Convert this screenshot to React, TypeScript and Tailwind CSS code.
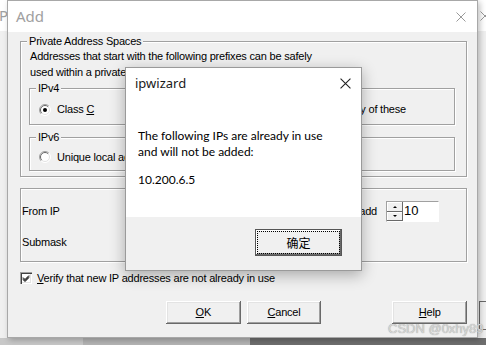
import React from 'react'

const ui = "font-['Liberation_Sans',Arial,sans-serif] text-[11px] tracking-[-0.2px] text-black"

const Radio: React.FC<{ checked?: boolean }> = ({ checked }) => (
  <svg width="12" height="12" viewBox="0 0 12 12" className="shrink-0">
    <circle cx="6" cy="6" r="5.5" fill="#fff" />
    <path d="M2.1 9.9 A5.5 5.5 0 0 1 9.9 2.1" fill="none" stroke="#a0a0a0" strokeWidth="1" />
    <path d="M2.8 9.2 A4.5 4.5 0 0 1 9.2 2.8" fill="none" stroke="#696969" strokeWidth="1" />
    <path d="M9.9 2.1 A5.5 5.5 0 0 1 2.1 9.9" fill="none" stroke="#fff" strokeWidth="1" />
    <path d="M9.2 2.8 A4.5 4.5 0 0 1 2.8 9.2" fill="none" stroke="#e3e3e3" strokeWidth="1" />
    {checked && <circle cx="6" cy="6" r="2" fill="#000" />}
  </svg>
)

const Group: React.FC<{ label?: string; className?: string; children?: React.ReactNode }> = ({ label, className, children }) => (
  <div className={`relative border border-[#a0a0a0] shadow-[inset_1px_1px_0_#fff,1px_1px_0_#fff] ${className ?? ''}`}>
    {label && (
      <span className="absolute -top-[8px] left-[6px] bg-[#f0f0f0] px-[2px] leading-[14px]">{label}</span>
    )}
    {children}
  </div>
)

const Btn: React.FC<{ children: React.ReactNode; className?: string }> = ({ children, className }) => (
  <div
    className={`flex h-[23px] w-[75px] items-center justify-center bg-[#f0f0f0] shadow-[inset_-1px_-1px_0_#696969,inset_1px_1px_0_#fff,inset_-2px_-2px_0_#a0a0a0,inset_2px_2px_0_#e3e3e3] ${className ?? ''}`}
  >
    {children}
  </div>
)

const CloseX: React.FC<{ color: string; size: number }> = ({ color, size }) => (
  <svg width={size} height={size} viewBox="0 0 10 10">
    <path d="M0.5 0.5 L9.5 9.5 M9.5 0.5 L0.5 9.5" stroke={color} strokeWidth="1" fill="none" />
  </svg>
)

export default function App() {
  return (
    <div className={`relative h-[345px] w-[486px] overflow-hidden bg-[#f0f0f0] ${ui}`}>
      {/* window behind */}
      <div className="absolute inset-0 flex flex-col">
        <div className="flex h-[31px] items-center justify-between bg-white">
          <span className="-ml-[1px] font-['Noto_Sans',sans-serif] text-[15px] text-[#a0a0a0]">P</span>
          <span className="mr-[-4px]"><CloseX color="#999" size={10} /></span>
        </div>
        <div className="flex-1 bg-[#f0f0f0]" />
        <div className="flex h-[7px]">
          <div className="w-[83px] bg-[#c8c8c8]" />
          <div className="w-[167px] bg-[#b4b4b4]" />
          <div className="flex-1 bg-[#6e6e6e]" />
        </div>
      </div>
      <div className="absolute left-[479px] top-[301px] h-[29px] w-[8px] border-b border-l border-t border-[#696969] bg-[#f0f0f0]" />

      {/* Add dialog */}
      <div className="absolute left-[7px] top-0 flex h-[338px] w-[471px] flex-col border border-[#a8a8a8] bg-[#f0f0f0] shadow-[2px_2px_6px_rgba(0,0,0,0.25)]">
        <div className="flex h-[31px] shrink-0 items-center justify-between bg-white pl-[8px] pr-[11px]">
          <span className="font-['Noto_Sans',sans-serif] text-[15px] tracking-normal text-[#a0a0a0]">Add</span>
          <CloseX color="#999" size={10} />
        </div>
        <div className="flex flex-col pl-[12px] pr-[10px]">
          <Group label="Private Address Spaces" className="mt-[9px] h-[136px] px-[9px] pt-[6px]">
            <div className="leading-[16px]">
              <div>Addresses that start with the following prefixes can be safely</div>
              <div>used within a private LAN</div>
            </div>
            <Group label="IPv4" className="ml-[-1px] mr-[2px] mt-[8px] h-[37px]">
              <div className="flex h-full items-center pl-[9px] pt-[6px]">
                <Radio checked />
                <span className="ml-[6px]">Class <u>C</u></span>
                <span className="ml-[42px]"><Radio /></span>
                <span className="ml-[6px]">Class <u>B</u></span>
                <span className="ml-auto mr-[48px]">Any of these</span>
              </div>
            </Group>
            <Group label="IPv6" className="ml-[-1px] mr-[2px] mt-[12px] h-[34px]">
              <div className="flex h-full items-center pl-[9px] pt-[6px]">
                <Radio />
                <span className="ml-[6px]">Unique local addresses</span>
              </div>
            </Group>
          </Group>

          <Group className="mt-[11px] h-[74px]">
            <div className="flex h-[42px] items-center pl-[1px] pr-[27px] pt-[2px]">
              <span>From IP</span>
              <span className="ml-auto mr-[9px]">add</span>
              <div className="flex h-[21px] border border-[#a0a0a0] border-b-white border-r-white">
                <div className="flex w-[16px] flex-col">
                  <div className="flex h-[10px] items-center justify-center bg-[#f0f0f0] shadow-[inset_-1px_-1px_0_#696969,inset_1px_1px_0_#fff]">
                    <div className="h-0 w-0 border-x-[2px] border-b-[2px] border-x-transparent border-b-black" />
                  </div>
                  <div className="flex h-[9px] items-center justify-center bg-[#f0f0f0] shadow-[inset_-1px_-1px_0_#696969,inset_1px_1px_0_#fff]">
                    <div className="h-0 w-0 border-x-[2px] border-t-[2px] border-x-transparent border-t-black" />
                  </div>
                </div>
                <div className="w-[35px] bg-white pl-[1px] text-[13px] leading-[18px] tracking-normal">10</div>
              </div>
            </div>
            <div className="flex h-[22px] items-center pl-[1px]">
              <span>Submask</span>
            </div>
          </Group>

          <div className="mt-[10px] flex h-[12px] items-center">
            <div className="relative h-[12px] w-[12px] bg-white shadow-[inset_1px_1px_0_#a0a0a0,inset_2px_2px_0_#404040,inset_-1px_-1px_0_#fff,inset_-2px_-2px_0_#e3e3e3]">
              <svg width="12" height="12" viewBox="0 0 12 12" className="absolute inset-0">
                <path d="M3 5.5 L5 7.5 L9 3.5 M3 6.5 L5 8.5 L9 4.5 M3 7.5 L5 9.5 L9 5.5" stroke="#000" strokeWidth="1" fill="none" />
              </svg>
            </div>
            <span className="ml-[5px]"><u>V</u>erify that new IP addresses are not already in use</span>
          </div>

          <div className="mt-[17px] flex">
            <Btn className="ml-[146px]"><span><u>O</u>K</span></Btn>
            <Btn className="ml-[6px]"><span><u>C</u>ancel</span></Btn>
            <Btn className="ml-[71px]"><span><u>H</u>elp</span></Btn>
          </div>
        </div>
      </div>

      {/* ipwizard message box */}
      <div className="absolute left-[125px] top-[67px] flex h-[204px] w-[237px] flex-col border border-[#9a9a9a] bg-white tracking-normal shadow-[0_4px_14px_rgba(0,0,0,0.3)]">
        <div className="flex h-[31px] items-center justify-between pl-[9px] pr-[10px]">
          <span className="font-['Noto_Sans',sans-serif] text-[13px] text-[#1a1a1a]">ipwizard</span>
          <CloseX color="#222" size={11} />
        </div>
        <div className="flex-1 pl-[12px] pt-[29px] font-['Lato',sans-serif] text-[12px] leading-[16px] text-[#000]">
          <div>The following IPs are already in use</div>
          <div>and will not be added:</div>
          <div className="mt-[12px]">10.200.6.5</div>
        </div>
        <div className="flex h-[53px] items-start justify-end bg-[#f0f0f0] pr-[19px] pt-[12px]">
          <div className="flex h-[27px] w-[87px] items-center justify-center border border-[#555] bg-[#f0f0f0] p-[1px] shadow-[inset_-1px_-1px_0_#696969,inset_1px_1px_0_#fff,inset_-2px_-2px_0_#a0a0a0]">
            <div className="flex h-full w-full items-center justify-center border border-dotted border-black">
              <span className="font-['Noto_Sans_CJK_SC',sans-serif] text-[12px] text-black">确定</span>
            </div>
          </div>
        </div>
      </div>

      {/* watermark */}
      <div className="absolute left-[388px] top-[319px] font-['Liberation_Sans',Arial,sans-serif] text-[13px] tracking-normal text-[#d6d6d6] [text-shadow:0_0_1px_#8a8a8a]">
        CSDN @0xhy89
      </div>
    </div>
  )
}
